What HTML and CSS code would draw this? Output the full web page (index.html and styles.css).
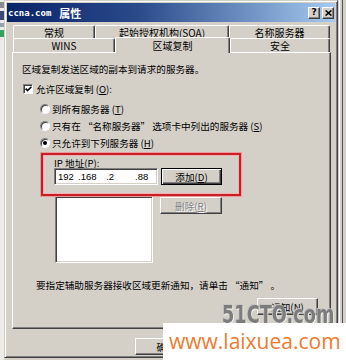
FILE: index.html
```html
<!DOCTYPE html>
<html lang="zh-CN">
<head>
<meta charset="utf-8">
<title>ccna.com 属性</title>
<link rel="stylesheet" href="styles.css">
</head>
<body>
<div class="screen">
  <div class="bg-left">
    <span class="bgi bgi-a"></span>
    <span class="bgi bgi-b"></span>
    <span class="bgi bgi-c"></span>
    <span class="bgi bgi-d"></span>
  </div>
  <div class="dialog">
    <div class="titlebar">
      <span class="title-latin">ccna.com</span><span class="title-cjk">属性</span>
      <span class="title-btns">
        <span class="tbtn">?</span>
        <span class="tbtn"><svg width="7" height="6" viewBox="0 0 7 6"><path d="M0.6 0.4 L6.4 5.6 M6.4 0.4 L0.6 5.6" stroke="#000" stroke-width="1.5"/></svg></span>
      </span>
    </div>
    <div class="tabs">
      <div class="tabrow back">
        <div class="tab w82">常规</div>
        <div class="tab w134">起始授权机构(SOA)</div>
        <div class="tab w101">名称服务器</div>
      </div>
      <div class="tabrow front">
        <div class="tab w102">WINS</div>
        <div class="tab w115 selected">区域复制</div>
        <div class="tab w100">安全</div>
      </div>
    </div>
    <div class="panel">
      <div class="desc">区域复制发送区域的副本到请求的服务器。</div>
      <div class="check-row">
        <span class="checkbox"><svg width="7" height="6" viewBox="0 0 7 6"><path d="M0.6 2.6 L2.6 4.6 L6.4 0.8" fill="none" stroke="#000" stroke-width="1.6"/></svg></span>
        <span>允许区域复制 (<u>O</u>):</span>
      </div>
      <div class="radios">
        <div class="radio-row"><span class="radio"></span><span>到所有服务器 (<u>T</u>)</span></div>
        <div class="radio-row"><span class="radio"></span><span>只有在 “名称服务器” 选项卡中列出的服务器 (<u>S</u>)</span></div>
        <div class="radio-row"><span class="radio"><span class="dot"></span></span><span>只允许到下列服务器 (<u>H</u>)</span></div>
      </div>
      <div class="redbox">
        <div class="ip-label">IP 地址(<u>P</u>):</div>
        <div class="ip-row">
          <div class="ip-input"><span class="oct o1">192</span><span class="oct o2">.168</span><span class="oct o3">.2</span><span class="oct">.88</span></div>
          <button class="btn default w61">添加(<u>D</u>)</button>
        </div>
      </div>
      <div class="list-row">
        <div class="listbox"></div>
        <button class="btn disabled w62">删除(<u>R</u>)</button>
      </div>
      <div class="note">要指定辅助服务器接收区域更新通知，请单击 “通知” 。</div>
      <div class="notify-row"><button class="btn w61">通知(<u>N</u>)</button></div>
    </div>
    <div class="dlg-buttons">
      <button class="btn w62">确定</button>
      <button class="btn w62">取消</button>
      <button class="btn w62">应用(<u>A</u>)</button>
    </div>
  </div>
  <div class="bg-right"></div>
  <div class="wm-51cto">51CTO.com</div>
  <div class="wm-site">www.laixuea.com</div>
</div>
</body>
</html>
```

FILE: styles.css
```css
* { box-sizing: border-box; }
html, body { margin: 0; padding: 0; }
body {
  width: 346px;
  height: 360px;
  overflow: hidden;
  background: #d4d0c8;
  font-family: "Noto Sans CJK SC", "Liberation Sans", sans-serif;
  font-size: 9.6px;
  color: #000;
}
u { text-decoration: underline; text-underline-offset: 1px; }

.screen {
  position: relative;
  display: flex;
  width: 346px;
  height: 360px;
  background: #d4d0c8;
}

.bg-left {
  width: 4px;
  flex: none;
  background: #ecebe7;
  display: flex;
  flex-direction: column;
  gap: 3px;
  padding-top: 2px;
}
.bgi { display: block; width: 4px; }
.bgi-a { height: 6px; background: #8a8a8a; }
.bgi-b { height: 9px; background: #3a4a70; }
.bgi-c { height: 4px; background: #9aa0a8; }
.bgi-d { height: 7px; background: #3aa060; }

.dialog {
  width: 334px;
  height: 358px;
  flex: none;
  border: 1px solid;
  border-color: #d4d0c8 #404040 #404040 #d4d0c8;
  box-shadow: inset 1px 1px #fff, inset -1px -1px #808080;
  padding: 2px;
  display: flex;
  flex-direction: column;
  background: #d4d0c8;
}

.titlebar {
  height: 19px;
  flex: none;
  display: flex;
  align-items: center;
  padding: 0 1px 0 1px;
  background: linear-gradient(to right, #0a246a 0%, #2a4a8a 40%, #a6caf0 100%);
  color: #fff;
}
.title-latin {
  font-family: "DejaVu Sans Mono", monospace;
  font-weight: bold;
  font-size: 9px;
}
.title-cjk {
  margin-left: 8px;
  font-family: "Noto Sans CJK SC", sans-serif;
  font-weight: bold;
  font-size: 11px;
}
.title-btns {
  margin-left: auto;
  display: flex;
  gap: 2px;
}
.tbtn {
  width: 12px;
  height: 12px;
  display: flex;
  align-items: center;
  justify-content: center;
  background: #d4d0c8;
  border: 1px solid;
  border-color: #fff #404040 #404040 #fff;
  box-shadow: inset -1px -1px #808080;
  color: #000;
  font-family: "DejaVu Sans", sans-serif;
  font-weight: bold;
  font-size: 9px;
  line-height: 1;
}

.tabs {
  margin: 3px 5px 0 6px;
  display: flex;
  flex-direction: column;
  position: relative;
  z-index: 1;
}
.tabrow { display: flex; align-items: flex-start; }
.tab {
  display: flex;
  align-items: center;
  justify-content: center;
  font-size: 10px;
  background: #d4d0c8;
  border-top: 1px solid #fff;
  border-left: 1px solid #fff;
  border-right: 1px solid #404040;
  box-shadow: inset -1px 0 #808080;
  border-radius: 2px 2px 0 0;
  white-space: nowrap;
}
.back .tab { height: 13px; }
.front .tab { height: 14px; }
.front .tab.selected {
  height: 16px;
  margin-top: -1px;
  margin-bottom: -1px;
  position: relative;
  z-index: 2;
}
.w82 { width: 82px; }
.w134 { width: 134px; }
.w101 { width: 101px; }
.w102 { width: 102px; }
.w115 { width: 115px; }
.w100 { width: 100px; }
.w61 { width: 61px; }
.w62 { width: 62px; }

.panel {
  margin: 0 4px 0 5px;
  height: 277px;
  flex: none;
  border: 1px solid;
  border-color: #fff #404040 #404040 #fff;
  box-shadow: inset -1px -1px #808080;
  display: flex;
  flex-direction: column;
  align-items: flex-start;
}
.desc { margin: 10px 0 0 9px; line-height: 12px; white-space: nowrap; }
.check-row {
  margin: 7px 0 0 10px;
  height: 14px;
  display: flex;
  align-items: center;
  gap: 3px;
  white-space: nowrap;
}
.checkbox {
  width: 10px;
  height: 10px;
  display: flex;
  align-items: center;
  justify-content: center;
  background: #fff;
  border: 1px solid;
  border-color: #808080 #fff #fff #808080;
  box-shadow: inset 1px 1px #404040;
}
.radios {
  margin: 4px 0 0 27px;
  display: flex;
  flex-direction: column;
}
.radio-row {
  height: 17px;
  display: flex;
  align-items: center;
  gap: 2px;
  white-space: nowrap;
}
.radio {
  width: 10px;
  height: 10px;
  border-radius: 50%;
  display: flex;
  align-items: center;
  justify-content: center;
  background: #fff;
  border: 1px solid;
  border-color: #808080 #fff #fff #808080;
  box-shadow: inset 1px 1px #404040;
}
.dot { width: 4px; height: 4px; border-radius: 50%; background: #000; }

.redbox {
  position: relative;
  z-index: 1;
  margin: 2px 0 0 28px;
  width: 200px;
  border: 2px solid #c81e28;
  box-shadow: 0 0 0 1px #ef9a9a, inset 0 0 0 1px #f2b0b0;
  padding: 3px 0 9px 11px;
}
.ip-label { height: 10px; line-height: 10px; white-space: nowrap; }
.ip-row { display: flex; gap: 3px; }
.ip-input {
  width: 104px;
  height: 17px;
  display: flex;
  align-items: center;
  background: #fff;
  border: 1px solid;
  border-color: #808080 #fff #fff #808080;
  box-shadow: inset 1px 1px #404040, inset -1px -1px #d4d0c8;
  padding-left: 2px;
  font-family: "Liberation Sans", sans-serif;
  font-size: 9.5px;
}
.oct { white-space: nowrap; }
.o1 { width: 21px; padding-left: 1px; }
.o2 { width: 28px; }
.o3 { width: 29px; }

.btn {
  height: 17px;
  padding: 0;
  display: flex;
  align-items: center;
  justify-content: center;
  font: inherit;
  color: #000;
  background: #d4d0c8;
  border: 1px solid;
  border-color: #fff #404040 #404040 #fff;
  box-shadow: inset -1px -1px #808080;
  white-space: nowrap;
}
.btn.default {
  border-color: #000;
  box-shadow: inset 1px 1px #fff, inset -1px -1px #404040, inset -2px -2px #808080;
}
.btn.disabled { color: #808080; text-shadow: 1px 1px #fff; }

.list-row {
  margin-left: 42px;
  display: flex;
  align-items: flex-start;
  gap: 7px;
}
.listbox {
  width: 98px;
  height: 67px;
  background: #fff;
  border: 1px solid;
  border-color: #808080 #fff #fff #808080;
  box-shadow: inset 1px 1px #404040, inset -1px -1px #d4d0c8;
}
.list-row .btn { margin-top: 1px; }

.note { margin: 16px 0 0 23px; line-height: 12px; white-space: nowrap; }
.notify-row { align-self: flex-end; margin: 7px 12px 0 0; }

.dlg-buttons {
  margin: 9px 4px 0 5px;
  display: flex;
  justify-content: flex-end;
  gap: 5px;
}

.bg-right {
  width: 8px;
  flex: none;
  background: linear-gradient(to right, #d4d0c8 0, #d4d0c8 1px, #fff 1px, #fff 2px, #d4d0c8 2px, #d4d0c8 4px, #505050 4px, #505050 5px, #d4d0c8 5px);
}

.wm-51cto {
  position: absolute;
  left: 222px;
  top: 303px;
  font-family: "DejaVu Sans", sans-serif;
  font-weight: bold;
  font-size: 24px;
  line-height: 24px;
  white-space: nowrap;
  color: #7c7c7c;
  text-shadow: 1px 1px 0 #f4f4f4, -1px -1px 0 #c4c4c4;
  transform: scaleX(0.74);
  transform-origin: left top;
}
.wm-site {
  position: absolute;
  left: 163px;
  top: 323px;
  right: 0;
  bottom: 0;
  background: #fff;
  padding-left: 6px;
  font-family: "Open Sans", sans-serif;
  font-size: 21px;
  line-height: 36px;
  color: #ef7a2e;
}
```
